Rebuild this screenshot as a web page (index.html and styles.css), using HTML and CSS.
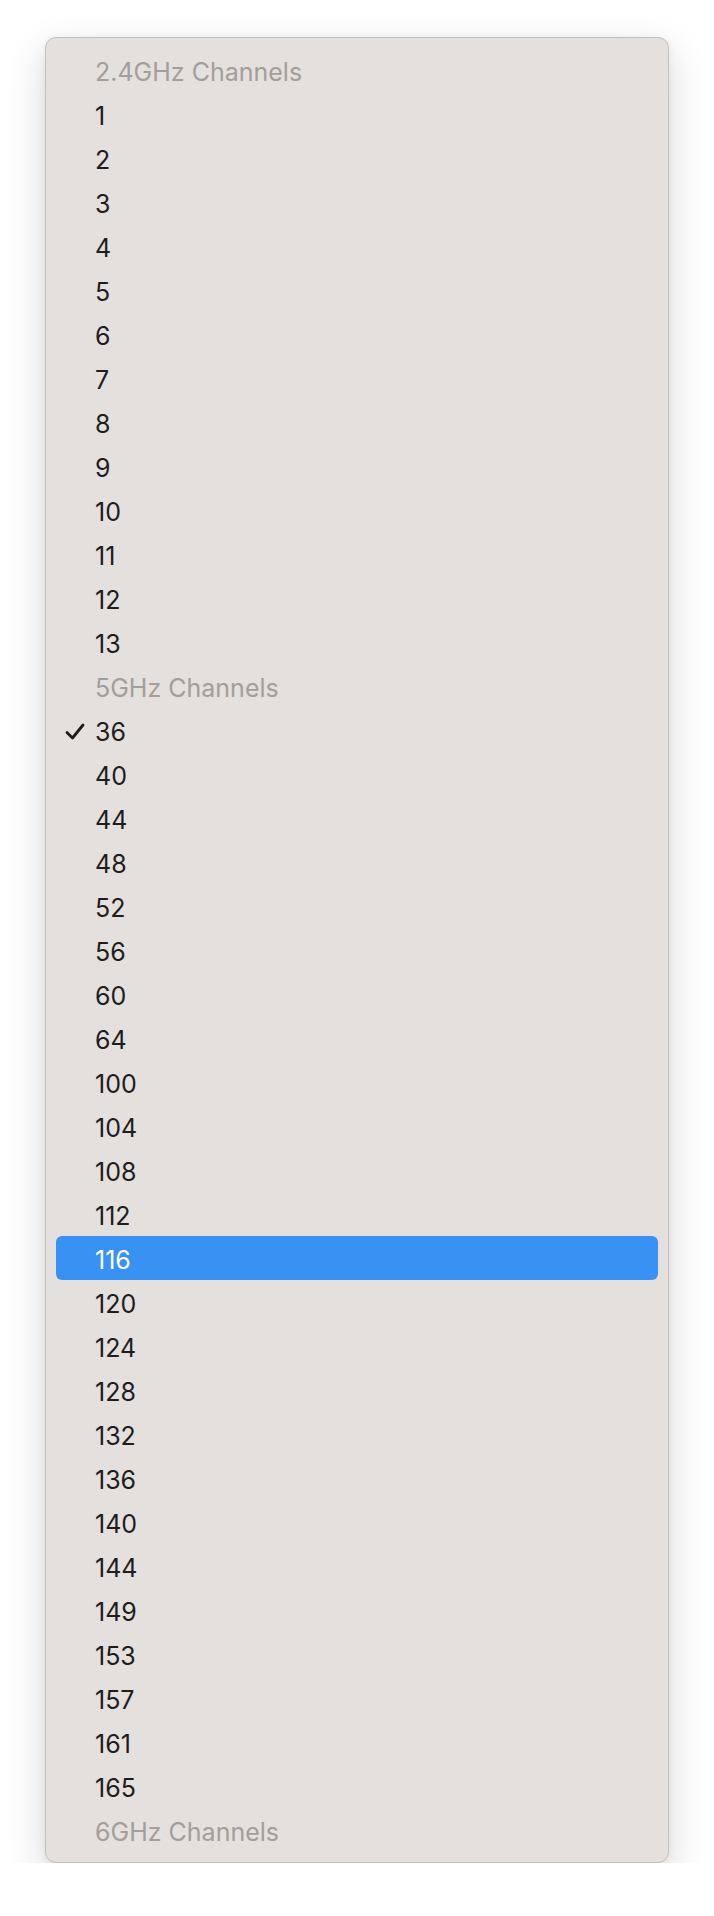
FILE: index.html
```html
<!DOCTYPE html>
<html>
<head>
<meta charset="utf-8">
<link rel="stylesheet" href="styles.css">
</head>
<body>
<div class="menu">
  <div class="item header">2.4GHz Channels</div>
  <div class="item">1</div>
  <div class="item">2</div>
  <div class="item">3</div>
  <div class="item">4</div>
  <div class="item">5</div>
  <div class="item">6</div>
  <div class="item">7</div>
  <div class="item">8</div>
  <div class="item">9</div>
  <div class="item">10</div>
  <div class="item">11</div>
  <div class="item">12</div>
  <div class="item">13</div>
  <div class="item header">5GHz Channels</div>
  <div class="item checked"><svg class="check" viewBox="0 0 20 17" width="20" height="17"><path d="M2 9.5 L7.5 15 L18 2" fill="none" stroke="#1d1d1d" stroke-width="2.8" stroke-linecap="round" stroke-linejoin="round"/></svg>36</div>
  <div class="item">40</div>
  <div class="item">44</div>
  <div class="item">48</div>
  <div class="item">52</div>
  <div class="item">56</div>
  <div class="item">60</div>
  <div class="item">64</div>
  <div class="item">100</div>
  <div class="item">104</div>
  <div class="item">108</div>
  <div class="item">112</div>
  <div class="item selected">116</div>
  <div class="item">120</div>
  <div class="item">124</div>
  <div class="item">128</div>
  <div class="item">132</div>
  <div class="item">136</div>
  <div class="item">140</div>
  <div class="item">144</div>
  <div class="item">149</div>
  <div class="item">153</div>
  <div class="item">157</div>
  <div class="item">161</div>
  <div class="item">165</div>
  <div class="item header">6GHz Channels</div>
</div>
</body>
</html>
```
FILE: styles.css
```css
html, body {
  margin: 0;
  padding: 0;
  background: #ffffff;
}
body {
  padding: 37px 46px 0 45px;
  font-family: Inter, "Noto Sans", "Liberation Sans", sans-serif;
}
.menu {
  width: 602px;
  padding: 10px;
  background: #e4e0dd;
  border: 1px solid #c3bfbc;
  border-radius: 11px;
  box-shadow: 0 14px 40px rgba(0, 0, 0, 0.16), 0 2px 8px rgba(0, 0, 0, 0.06);
}
.item {
  position: relative;
  height: 40px;
  line-height: 40px;
  padding-top: 4px;
  padding-left: 39px;
  font-size: 25px;
  color: #1d1d1d;
  border-radius: 6px;
  white-space: nowrap;
}
.header {
  color: #a29e9b;
}
.selected {
  background: #3a91f4;
  color: #ffffff;
}
.check {
  position: absolute;
  left: 9px;
  top: 15px;
}
```
